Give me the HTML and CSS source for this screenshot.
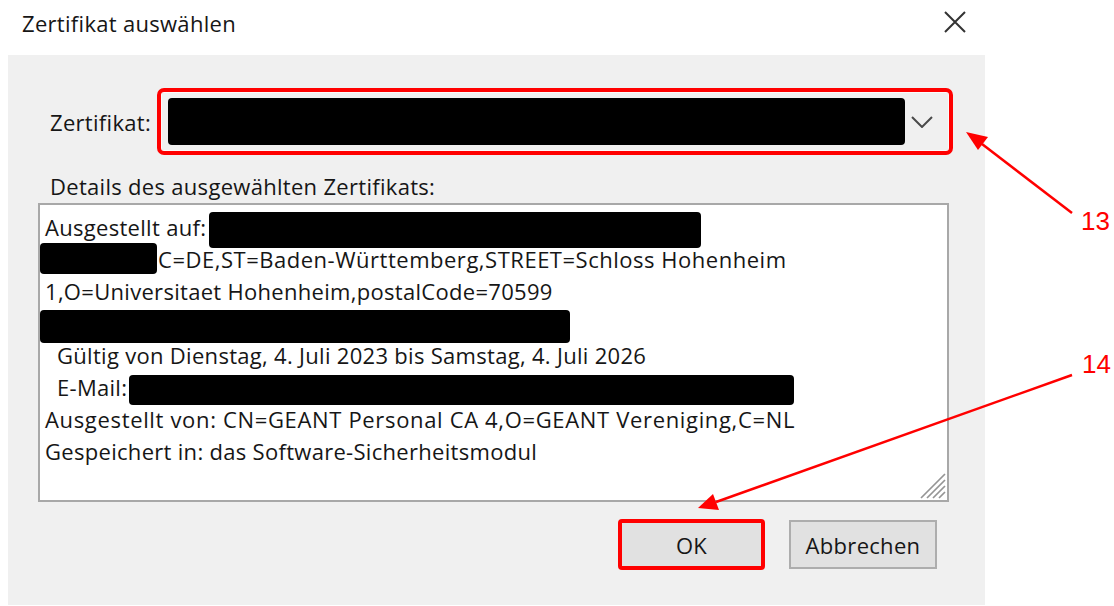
FILE: index.html
```html
<!DOCTYPE html>
<html lang="de">
<head>
<meta charset="utf-8">
<title>Zertifikat auswählen</title>
<link rel="stylesheet" href="styles.css">
</head>
<body>
<div class="window">
  <div class="titlebar">
    <span class="title">Zertifikat auswählen</span>
    <svg class="close" width="22" height="22" viewBox="0 0 22 22" aria-hidden="true">
      <path d="M1 1 L21 21 M21 1 L1 21" stroke="#333" stroke-width="2" fill="none"/>
    </svg>
  </div>

  <div class="panel">
    <div class="cert-row">
      <label class="cert-label">Zertifikat:</label>
      <div class="mark mark-combo">
        <div class="combo">
          <span class="redact combo-redact"></span>
          <svg class="chevron" width="22" height="12" viewBox="0 0 22 12" aria-hidden="true">
            <path d="M1 1 L11 11 L21 1" stroke="#4a4a4a" stroke-width="2" fill="none"/>
          </svg>
        </div>
      </div>
    </div>

    <div class="details-label">Details des ausgewählten Zertifikats:</div>

    <div class="details">
      <div class="line">Ausgestellt auf:<span class="redact r1"></span></div>
      <div class="line"><span class="redact r2"></span><span class="dn">C=DE,ST=Baden-Württemberg,STREET=Schloss Hohenheim</span></div>
      <div class="line">1,O=Universitaet Hohenheim,postalCode=70599</div>
      <div class="line"><span class="redact r4"></span></div>
      <div class="line indent">Gültig von Dienstag, 4. Juli 2023 bis Samstag, 4. Juli 2026</div>
      <div class="line indent">E-Mail:<span class="redact r6"></span></div>
      <div class="line dn-wide">Ausgestellt von: CN=GEANT Personal CA 4,O=GEANT Vereniging,C=NL</div>
      <div class="line">Gespeichert in: das Software-Sicherheitsmodul</div>
      <svg class="grip" width="30" height="30" viewBox="0 0 30 30" aria-hidden="true">
        <path d="M29 5 L5 29 M29 11 L11 29 M29 17 L17 29 M29 23 L23 29" stroke="#959595" stroke-width="1.7" fill="none"/>
      </svg>
    </div>

    <div class="buttons">
      <button class="btn btn-ok">OK</button>
      <button class="btn">Abbrechen</button>
    </div>
  </div>

  <svg class="notes" width="1114" height="606" viewBox="0 0 1114 606" aria-hidden="true">
    <line x1="1072" y1="213" x2="982" y2="144" stroke="#ff0000" stroke-width="2.5"/>
    <path d="M966 132 L988 137 L978 150 Z" fill="#ff0000"/>
    <line x1="1072" y1="375" x2="716" y2="502" stroke="#ff0000" stroke-width="2.5"/>
    <path d="M698 508 L713 494 L719 510 Z" fill="#ff0000"/>
    <text class="note-num" x="1081" y="230">13</text>
    <text class="note-num" x="1082" y="373">14</text>
  </svg>
</div>
</body>
</html>
```

FILE: styles.css
```css
* { box-sizing: border-box; }

html, body {
  margin: 0;
  padding: 0;
  background: #ffffff;
}

.window {
  position: relative;
  width: 1114px;
  height: 606px;
  background: #ffffff;
  font-family: "Open Sans", "Noto Sans", sans-serif;
  font-size: 22px;
  letter-spacing: 0.3px;
  color: #161616;
  overflow: hidden;
}

/* title bar */
.titlebar {
  height: 55px;
  display: flex;
  align-items: flex-start;
  justify-content: space-between;
  padding: 8px 148px 0 22px;
}

.title {
  line-height: 30px;
}

.close {
  margin-top: 3px;
}

/* grey dialog body */
.panel {
  margin-left: 8px;
  width: 977px;
  height: 550px;
  background: #f0f0f0;
  padding-top: 33px;
}

.cert-row {
  display: flex;
  align-items: center;
  height: 67px;
}

.cert-label {
  width: 149px;
  padding-left: 42px;
  padding-top: 1px;
}

/* red highlight frame drawn over a control */
.mark {
  position: relative;
}

.mark::after {
  content: "";
  position: absolute;
  inset: 0;
  border: 4px solid #ff0000;
  border-radius: 7px;
  pointer-events: none;
}

.mark-combo {
  width: 796px;
  height: 67px;
  padding: 2px;
}

.combo {
  height: 63px;
  border: 2px solid #0078d7;
  background: #f0f0f0;
  box-shadow: inset 0 0 0 1px #fbfbfb;
  display: flex;
  align-items: center;
  padding-left: 7px;
  padding-right: 16px;
}

.redact {
  display: inline-block;
  background: #000000;
  border-radius: 4px;
  vertical-align: middle;
}

.combo-redact {
  width: 737px;
  height: 47px;
}

.chevron {
  margin-left: auto;
}

.details-label {
  margin-top: 17px;
  padding-left: 42px;
  line-height: 28px;
}

/* certificate details text box */
.details {
  position: relative;
  margin-top: 3px;
  margin-left: 30px;
  width: 911px;
  height: 299px;
  background: #ffffff;
  border: 2px solid #a8a8a8;
  padding: 6px 0 0 5px;
  line-height: 32px;
  white-space: nowrap;
}

.line {
  height: 32px;
}

.indent {
  padding-left: 12px;
}

/* distinguished-name strings run a little wider */
.dn {
  letter-spacing: 0.52px;
}

.dn-wide {
  letter-spacing: 0.66px;
}

.r1 {
  width: 492px;
  height: 36px;
  margin: -2px 0 -2px 3px;
}

.r2 {
  width: 117px;
  height: 31px;
  margin: 0 1px 0 -5px;
  vertical-align: -6px;
}

.r4 {
  width: 530px;
  height: 33px;
  margin-left: -5px;
}

.r6 {
  width: 665px;
  height: 30px;
  margin-left: 2px;
}

.grip {
  position: absolute;
  right: 1px;
  bottom: 1px;
}

/* dialog buttons */
.buttons {
  display: flex;
  justify-content: flex-end;
  align-items: center;
  gap: 24px;
  margin-top: 17px;
  padding-right: 48px;
}

.btn {
  width: 148px;
  height: 49px;
  background: #e1e1e1;
  border: 2px solid #adadad;
  font-family: inherit;
  font-size: inherit;
  letter-spacing: inherit;
  color: #161616;
  padding: 0;
}

.btn-ok {
  width: 147px;
  height: 51px;
  border: 4px solid #ff0000;
  border-radius: 4px;
}

/* annotation layer */
.notes {
  position: absolute;
  left: 0;
  top: 0;
  pointer-events: none;
}

.note-num {
  font-family: "Liberation Sans", Arial, sans-serif;
  font-size: 26px;
  letter-spacing: 0;
  fill: #ff0000;
}
```
